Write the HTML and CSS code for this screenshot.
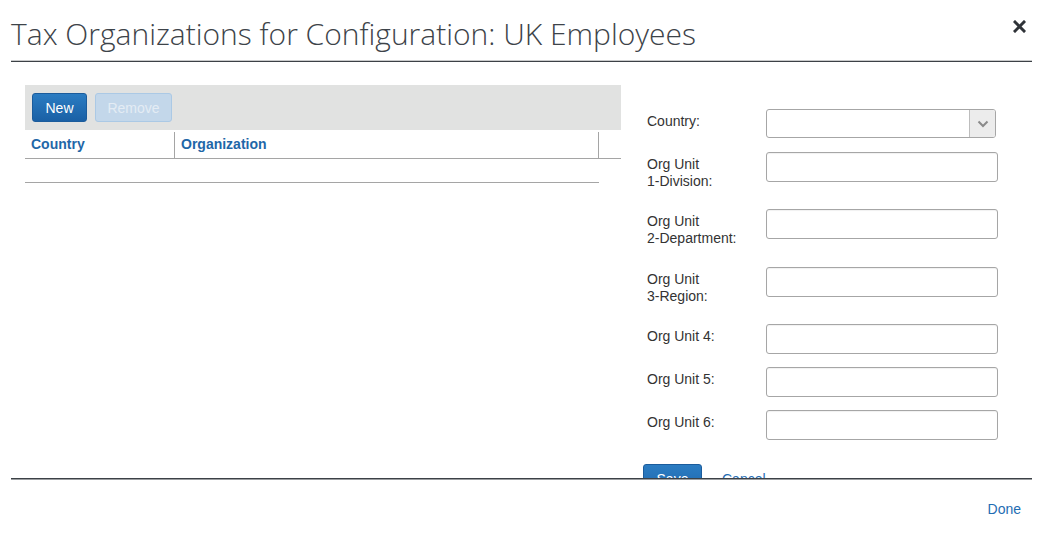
FILE: index.html
```html
<!DOCTYPE html>
<html>
<head>
<meta charset="utf-8">
<link rel="stylesheet" href="styles.css">
</head>
<body>
<div class="dialog">
  <header class="dlg-header">
    <h1 class="dlg-title">Tax Organizations for Configuration: UK Employees</h1>
    <button class="close-btn" aria-label="Close">
      <svg width="13" height="13" viewBox="0 0 13 13"><path d="M2 2 L11 11 M11 2 L2 11" stroke="#2f3338" stroke-width="3" stroke-linecap="square"/></svg>
    </button>
  </header>
  <main class="dlg-body">
    <section class="grid-panel">
      <div class="toolbar">
        <button class="btn btn-primary">New</button>
        <button class="btn btn-disabled">Remove</button>
      </div>
      <div class="grid-head">
        <div class="col col-country">Country</div>
        <div class="col col-org">Organization</div>
      </div>
      <div class="grid-row"></div>
    </section>
    <section class="form-panel">
      <div class="form-row">
        <label class="lbl">Country:</label>
        <div class="select">
          <span class="select-val"></span>
          <span class="select-arrow"><svg width="12" height="8" viewBox="0 0 12 8"><path d="M1.5 1.5 L6 6 L10.5 1.5" fill="none" stroke="#8a8a8a" stroke-width="2"/></svg></span>
        </div>
      </div>
      <div class="form-row tall">
        <label class="lbl">Org Unit<br>1-Division:</label>
        <div class="input"></div>
      </div>
      <div class="form-row tall">
        <label class="lbl">Org Unit<br>2-Department:</label>
        <div class="input"></div>
      </div>
      <div class="form-row tall">
        <label class="lbl">Org Unit<br>3-Region:</label>
        <div class="input"></div>
      </div>
      <div class="form-row">
        <label class="lbl">Org Unit 4:</label>
        <div class="input"></div>
      </div>
      <div class="form-row">
        <label class="lbl">Org Unit 5:</label>
        <div class="input"></div>
      </div>
      <div class="form-row">
        <label class="lbl">Org Unit 6:</label>
        <div class="input"></div>
      </div>
      <div class="form-actions">
        <button class="btn btn-primary btn-save">Save</button>
        <a class="link cancel">Cancel</a>
      </div>
    </section>
  </main>
  <footer class="dlg-footer">
    <a class="link done">Done</a>
  </footer>
</div>
</body>
</html>
```

FILE: styles.css
```css
* { box-sizing: border-box; }
html, body { margin: 0; padding: 0; background: #fff; }
body { font-family: "Liberation Sans", Arial, sans-serif; font-size: 14px; color: #333; }

.dialog { width: 1040px; height: 535px; padding: 0 8px 0 11px; }

.dlg-header {
  height: 62px;
  display: flex;
  align-items: flex-start;
  justify-content: space-between;
  border-bottom: 1px solid #3c4146;
  box-shadow: inset 0 -1px 0 #c9cacb;
}
.dlg-title {
  margin: 0;
  padding-top: 14px;
  font-family: "Open Sans", sans-serif;
  font-weight: 300;
  font-size: 30px;
  line-height: 40px;
  color: #3d4349;
}
.close-btn {
  border: 0;
  background: none;
  padding: 0;
  margin: 20px 6px 0 0;
  width: 13px;
  height: 13px;
  display: flex;
}

.dlg-body {
  height: 416px;
  overflow: hidden;
  display: flex;
  align-items: flex-start;
}

.grid-panel { margin-left: 14px; padding-top: 23px; width: 596px; }
.toolbar {
  height: 45px;
  background: #e1e2e1;
  padding: 8px 7px;
  display: flex;
  gap: 8px;
}
.btn {
  height: 29px;
  border-radius: 3px;
  font-family: "Liberation Sans", Arial, sans-serif;
  font-size: 14px;
  padding: 0;
  cursor: default;
}
.btn-primary {
  width: 55px;
  color: #fff;
  background: linear-gradient(#2b7cc2, #1a60a5);
  border: 1px solid #1b5c9c;
}
.btn-disabled {
  width: 77px;
  color: #e4ecf4;
  background: #c3d7ea;
  border: 1px solid #abc9e5;
}
.grid-head {
  height: 29px;
  display: flex;
  border-bottom: 1px solid #a5a5a5;
  padding-right: 22px;
}
.col {
  font-weight: bold;
  color: #1f67a8;
  margin-top: 2px;
  padding: 4px 0 0 6px;
  height: 26px;
  border-right: 1px solid #a5a5a5;
}
.col-country { width: 150px; }
.col-org { flex: 1; }
.grid-row { width: 574px; height: 24px; border-bottom: 1px solid #a5a5a5; }

.form-panel { margin-left: 22px; padding-top: 47px; width: 355px; }
.form-row { display: flex; height: 30px; margin-bottom: 13px; }
.form-row.tall { height: 44px; }
.form-row:nth-child(3) { margin-bottom: 14px; }
.lbl {
  width: 123px;
  padding: 4px 0 0 4px;
  line-height: 17px;
  color: #333;
}
.input {
  width: 232px;
  height: 30px;
  border: 1px solid #a6a6a6;
  border-radius: 3px;
  background: #fff;
  box-shadow: inset 0 1px 1px rgba(0,0,0,0.06);
}
.select {
  width: 230px;
  height: 29px;
  border: 1px solid #a6a6a6;
  border-radius: 3px;
  display: flex;
  overflow: hidden;
}
.select-val { flex: 1; }
.select-arrow {
  width: 26px;
  background: #ececec;
  border-left: 1px solid #bdbdbd;
  display: flex;
  align-items: center;
  justify-content: center;
}
.form-actions { display: flex; align-items: center; gap: 20px; margin-top: 24px; }
.btn-save { flex: none; width: 59px; height: 29px; background: linear-gradient(#2b7cc2, #2068ad); }
.link { color: #1f6db3; text-decoration: none; font-size: 14px; }

.dlg-footer {
  border-top: 1px solid #3c4146;
  box-shadow: inset 0 1px 0 #9a9da0;
  height: 57px;
  display: flex;
  justify-content: flex-end;
  padding: 22px 11px 0 0;
}
.done { line-height: 17px; }
```
